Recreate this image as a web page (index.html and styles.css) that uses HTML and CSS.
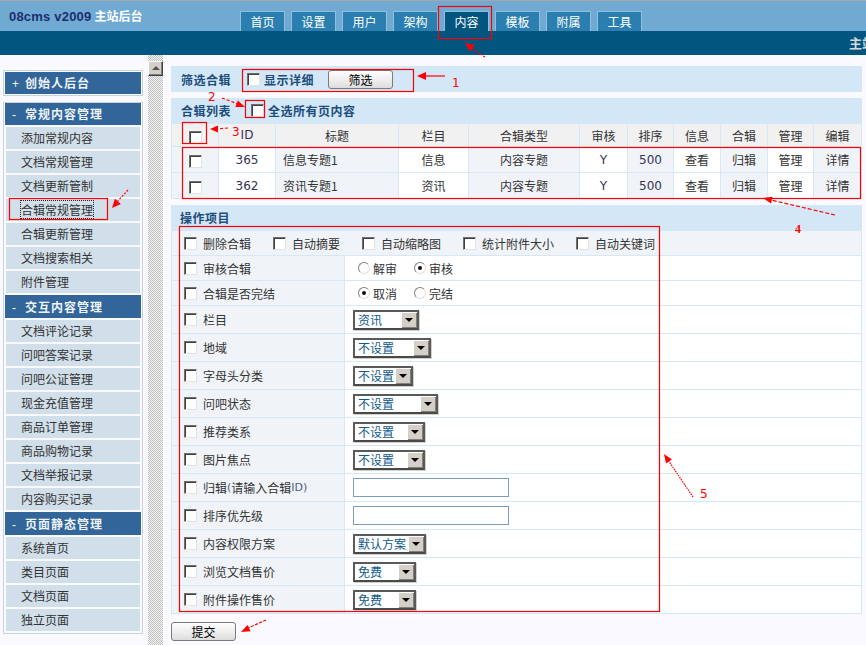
FILE: index.html
```html
<!DOCTYPE html>
<html lang="zh-CN">
<head>
<meta charset="utf-8">
<title>08cms v2009 主站后台</title>
<link rel="stylesheet" href="styles.css">
</head>
<body>
<header class="top">
  <div class="top-band">
    <div class="brand"><span class="brand-en">08cms v2009</span><span class="brand-cn">主站后台</span></div>
    <ul class="tabs">
      <li class="tab">首页</li>
      <li class="tab">设置</li>
      <li class="tab">用户</li>
      <li class="tab">架构</li>
      <li class="tab active">内容</li>
      <li class="tab">模板</li>
      <li class="tab">附属</li>
      <li class="tab">工具</li>
    </ul>
  </div>
  <div class="sub-band"><span class="crumb">主站首页</span></div>
</header>

<div class="wrap">
  <aside class="side">
    <div class="box">
      <div class="grp"><span class="sign">+</span>创始人后台</div>
    </div>
    <div class="box box-main">
      <div class="grp"><span class="sign">-</span>常规内容管理</div>
      <div class="item">添加常规内容</div>
      <div class="item">文档常规管理</div>
      <div class="item">文档更新管制</div>
      <div class="item"><span class="focus">合辑常规管理</span></div>
      <div class="item">合辑更新管理</div>
      <div class="item">文档搜索相关</div>
      <div class="item">附件管理</div>
      <div class="grp"><span class="sign">-</span>交互内容管理</div>
      <div class="item">文档评论记录</div>
      <div class="item">问吧答案记录</div>
      <div class="item">问吧公证管理</div>
      <div class="item">现金充值管理</div>
      <div class="item">商品订单管理</div>
      <div class="item">商品购物记录</div>
      <div class="item">文档举报记录</div>
      <div class="item">内容购买记录</div>
      <div class="grp"><span class="sign">-</span>页面静态管理</div>
      <div class="item">系统首页</div>
      <div class="item">类目页面</div>
      <div class="item">文档页面</div>
      <div class="item">独立页面</div>
    </div>
  </aside>

  <div class="split"><span class="split-btn"></span></div>

  <main class="main">
    <div class="bar filter">
      <span class="bar-title">筛选合辑</span>
      <span class="cb cb-filter"></span>
      <span class="bar-label">显示详细</span>
      <button class="btn btn-filter">筛选</button>
    </div>

    <div class="bar listbar">
      <span class="bar-title">合辑列表</span>
      <span class="cb cb-all"></span>
      <span class="bar-label">全选所有页内容</span>
    </div>

    <table class="list">
      <colgroup>
        <col class="c-chk"><col class="c-id"><col class="c-title"><col class="c-cat"><col class="c-type"><col class="c-chk2"><col class="c-ord"><col class="c-info"><col class="c-alb"><col class="c-mng"><col class="c-edit">
      </colgroup>
      <thead>
        <tr>
          <th><span class="cb"></span></th>
          <th class="num">ID</th>
          <th>标题</th>
          <th>栏目</th>
          <th>合辑类型</th>
          <th>审核</th>
          <th>排序</th>
          <th>信息</th>
          <th>合辑</th>
          <th>管理</th>
          <th>编辑</th>
        </tr>
      </thead>
      <tbody>
        <tr>
          <td class="alt"><span class="cb"></span></td>
          <td class="num">365</td>
          <td class="alt left">信息专题1</td>
          <td>信息</td>
          <td class="alt">内容专题</td>
          <td class="num">Y</td>
          <td class="alt num">500</td>
          <td>查看</td>
          <td class="alt">归辑</td>
          <td>管理</td>
          <td class="alt">详情</td>
        </tr>
        <tr>
          <td class="alt"><span class="cb"></span></td>
          <td class="num">362</td>
          <td class="alt left">资讯专题1</td>
          <td>资讯</td>
          <td class="alt">内容专题</td>
          <td class="num">Y</td>
          <td class="alt num">500</td>
          <td>查看</td>
          <td class="alt">归辑</td>
          <td>管理</td>
          <td class="alt">详情</td>
        </tr>
      </tbody>
    </table>

    <div class="bar opsbar"><span class="bar-title">操作项目</span></div>

    <div class="ops">
      <div class="row row-first">
        <span class="opt"><span class="cb"></span>删除合辑</span>
        <span class="opt"><span class="cb"></span>自动摘要</span>
        <span class="opt"><span class="cb"></span>自动缩略图</span>
        <span class="opt"><span class="cb"></span>统计附件大小</span>
        <span class="opt"><span class="cb"></span>自动关键词</span>
      </div>
      <div class="row row-short">
        <div class="lab"><span class="cb"></span>审核合辑</div>
        <div class="val val-radio"><span class="rd"></span><span class="rd-label">解审</span><span class="rd on"></span><span class="rd-label">审核</span></div>
      </div>
      <div class="row row-short">
        <div class="lab"><span class="cb"></span>合辑是否完结</div>
        <div class="val val-radio"><span class="rd on"></span><span class="rd-label">取消</span><span class="rd"></span><span class="rd-label">完结</span></div>
      </div>
      <div class="row">
        <div class="lab"><span class="cb"></span>栏目</div>
        <div class="val"><span class="sel w66"><span class="sel-val">资讯</span><span class="sel-btn"></span></span></div>
      </div>
      <div class="row">
        <div class="lab"><span class="cb"></span>地域</div>
        <div class="val"><span class="sel w78"><span class="sel-val">不设置</span><span class="sel-btn"></span></span></div>
      </div>
      <div class="row">
        <div class="lab"><span class="cb"></span>字母头分类</div>
        <div class="val"><span class="sel w60"><span class="sel-val">不设置</span><span class="sel-btn"></span></span></div>
      </div>
      <div class="row">
        <div class="lab"><span class="cb"></span>问吧状态</div>
        <div class="val"><span class="sel w85"><span class="sel-val">不设置</span><span class="sel-btn"></span></span></div>
      </div>
      <div class="row">
        <div class="lab"><span class="cb"></span>推荐类系</div>
        <div class="val"><span class="sel w72"><span class="sel-val">不设置</span><span class="sel-btn"></span></span></div>
      </div>
      <div class="row">
        <div class="lab"><span class="cb"></span>图片焦点</div>
        <div class="val"><span class="sel w72"><span class="sel-val">不设置</span><span class="sel-btn"></span></span></div>
      </div>
      <div class="row">
        <div class="lab"><span class="cb"></span>归辑<span class="latin">(</span>请输入合辑<span class="latin">ID)</span></div>
        <div class="val"><span class="txt"></span></div>
      </div>
      <div class="row">
        <div class="lab"><span class="cb"></span>排序优先级</div>
        <div class="val"><span class="txt"></span></div>
      </div>
      <div class="row">
        <div class="lab"><span class="cb"></span>内容权限方案</div>
        <div class="val"><span class="sel w73"><span class="sel-val">默认方案</span><span class="sel-btn"></span></span></div>
      </div>
      <div class="row">
        <div class="lab"><span class="cb"></span>浏览文档售价</div>
        <div class="val"><span class="sel w63"><span class="sel-val">免费</span><span class="sel-btn"></span></span></div>
      </div>
      <div class="row">
        <div class="lab"><span class="cb"></span>附件操作售价</div>
        <div class="val"><span class="sel w63"><span class="sel-val">免费</span><span class="sel-btn"></span></span></div>
      </div>
    </div>

    <button class="btn btn-submit">提交</button>
  </main>
</div>

<svg class="notes" width="866" height="645" viewBox="0 0 866 645" xmlns="http://www.w3.org/2000/svg">
  <g fill="none" stroke="#ff0000" stroke-width="1.2">
    <rect x="438.5" y="6.5" width="53" height="32"/>
    <rect x="9.5" y="198.5" width="98" height="21"/>
    <rect x="242.5" y="69.5" width="171" height="22"/>
    <rect x="245.5" y="100.5" width="19" height="17"/>
    <rect x="182.5" y="122.5" width="24" height="21"/>
    <rect x="182.5" y="147.5" width="678" height="51"/>
    <rect x="179.5" y="226.5" width="480" height="385"/>
    <line x1="485" y1="57" x2="470" y2="47" stroke-dasharray="2 1.5"/>
    <line x1="128" y1="190" x2="116" y2="203" stroke-dasharray="2 1.5"/>
    <line x1="445" y1="76" x2="424" y2="76"/>
    <line x1="222" y1="98" x2="238" y2="104" stroke-dasharray="3 2"/>
    <line x1="228" y1="128" x2="217" y2="129" stroke-dasharray="3 2"/>
    <line x1="835" y1="215" x2="771" y2="200" stroke-dasharray="4 2"/>
    <line x1="693" y1="497" x2="668" y2="460" stroke-dasharray="1.5 1"/>
    <line x1="266" y1="620" x2="248" y2="628" stroke-dasharray="3 1.5"/>
  </g>
  <g fill="#ff0000">
    <polygon points="465,43 474.7,44.9 470.1,51.5"/>
    <polygon points="112,208 120.9,203.9 114.9,198.7"/>
    <polygon points="417,76 426,72 426,80"/>
    <polygon points="245,107 235.3,107 237.9,100.4"/>
    <polygon points="210,129 218,125.5 218,132.5"/>
    <polygon points="763,198 772.6,196.7 771,203.5"/>
    <polygon points="664,454 671.9,459.5 666.1,463.5"/>
    <polygon points="241,632 250.6,631.3 247.6,624.9"/>
  </g>
  <g class="note-num" fill="#ff0000">
    <text x="452" y="87">1</text>
    <text x="208" y="101">2</text>
    <text x="232" y="136">3</text>
    <text x="795" y="233" class="note-serif">4</text>
    <text x="700" y="498">5</text>
  </g>
</svg>
</body>
</html>
```

FILE: styles.css
```css
* { box-sizing: border-box; }

html, body {
  margin: 0;
  padding: 0;
}

body {
  position: relative;
  width: 866px;
  height: 645px;
  overflow: hidden;
  background: #f9f9fe;
  font-family: "DejaVu Sans", "Noto Sans CJK SC", sans-serif;
  font-size: 12px;
  color: #333;
}

/* ---------- header ---------- */
.top-band {
  display: flex;
  align-items: flex-end;
  height: 31px;
  border-top: 1px solid #a6a6a6;
  background: #70aad3;
}

.brand {
  align-self: center;
  width: 240px;
  padding-left: 9px;
  font-weight: bold;
  white-space: nowrap;
  line-height: 16px;
}

.brand-en {
  font-family: "Liberation Sans", sans-serif;
  font-size: 13px;
  color: #1b2f6e;
  letter-spacing: 0.2px;
}

.brand-cn {
  margin-left: 3px;
  font-family: "Noto Sans CJK SC", sans-serif;
  font-size: 12px;
  color: #fff;
}

.tabs {
  display: flex;
  gap: 6px;
  margin: 0;
  padding: 0;
  list-style: none;
}

.tab {
  width: 45px;
  height: 20px;
  border: 1px solid #8fc0e0;
  border-bottom: none;
  background: #2b7fb0;
  color: #fff;
  text-align: center;
  font-family: "Noto Sans CJK SC", sans-serif;
  font-size: 12px;
  line-height: 20px;
}

.tab.active {
  background: #02557f;
}

.sub-band {
  height: 24px;
  background: #02557f;
  padding-left: 849px;
  overflow: hidden;
  white-space: nowrap;
}

.crumb {
  font-family: "Noto Sans CJK SC", sans-serif;
  font-size: 13px;
  font-weight: bold;
  color: #d9d9d9;
  line-height: 24px;
}

/* ---------- layout ---------- */
.wrap {
  display: flex;
  align-items: flex-start;
}

/* ---------- sidebar ---------- */
.side {
  width: 140px;
  margin: 15px 0 0 3px;
}

.box {
  border: 1px solid #c5d3e1;
  padding: 1px;
}

.box-main {
  margin-top: 6px;
  padding-top: 0;
  padding-bottom: 2px;
}

.grp {
  height: 22px;
  background: #32669a;
  color: #eef3f8;
  font-family: "Noto Sans CJK SC", sans-serif;
  font-weight: bold;
  font-size: 12px;
  letter-spacing: 1px;
  line-height: 22px;
  white-space: nowrap;
}

.box-main .grp { margin-top: 2px; height: 23px; line-height: 23px; }
.box-main .grp:first-child { margin-top: 0; height: 22px; line-height: 22px; }

.sign {
  display: inline-block;
  width: 20px;
  padding-left: 7px;
  font-family: "Liberation Sans", sans-serif;
  font-weight: normal;
  letter-spacing: 0;
}

.item {
  height: 22px;
  margin: 2px 1px 0;
  background: #d1dfea;
  padding-left: 15px;
  font-family: "Noto Sans CJK SC", sans-serif;
  font-size: 12px;
  line-height: 22px;
  color: #333;
  white-space: nowrap;
}

.focus {
  outline: 1px dotted #222;
  outline-offset: 0;
}

/* ---------- splitter ---------- */
.split {
  width: 15px;
  height: 590px;
  margin-left: 5px;
  padding-top: 6px;
  background: repeating-conic-gradient(#bfbfbf 0 25%, #f4f4f4 0 50%) 0 0 / 2px 2px;
}

.split-btn {
  display: block;
  position: relative;
  width: 15px;
  height: 15px;
  background: #d4d0c8;
  border: 1px solid;
  border-color: #fff #404040 #404040 #fff;
  box-shadow: inset -1px -1px #808080;
}

.split-btn::after {
  content: "";
  position: absolute;
  left: 3px;
  top: 4px;
  border-left: 4px solid transparent;
  border-right: 4px solid transparent;
  border-bottom: 4px solid #555;
}

/* ---------- main ---------- */
.main {
  width: 691px;
  margin: 11px 0 0 8px;
}

.bar {
  display: flex;
  align-items: center;
  height: 26px;
  background: #d4e7f7;
  padding-left: 10px;
  font-family: "Noto Sans CJK SC", sans-serif;
  white-space: nowrap;
}

.bar-title {
  font-weight: bold;
  font-size: 12px;
  letter-spacing: 0.5px;
  color: #1c4d7b;
}

.bar-label {
  margin-left: 4px;
  font-weight: bold;
  font-size: 12px;
  letter-spacing: 0.5px;
  color: #1c4d7b;
}

.filter { margin-bottom: 6px; }
.cb-filter { margin-left: 16px; }
.btn-filter { margin-left: 14px; }

.listbar { height: 25px; }
.cb-all { margin-left: 20px; }

.opsbar { height: 25px; margin-top: 6px; padding-left: 9px; }

/* checkbox & radio */
.cb {
  display: inline-block;
  flex: none;
  width: 13px;
  height: 13px;
  vertical-align: middle;
  background: #fff;
  border: 1px solid;
  border-color: #707070 #e2e2e2 #e2e2e2 #707070;
  box-shadow: inset 1px 1px #404040;
}

.rd {
  display: inline-block;
  flex: none;
  position: relative;
  width: 12px;
  height: 12px;
  border-radius: 50%;
  border: 1px solid;
  border-color: #808080 #e0e0e0 #e0e0e0 #808080;
  background: #fff;
}

.rd.on::after {
  content: "";
  position: absolute;
  left: 3px;
  top: 3px;
  width: 4px;
  height: 4px;
  border-radius: 50%;
  background: #111;
}

.rd-label {
  margin-left: 3px;
  margin-right: 17px;
}

/* buttons */
.btn {
  width: 65px;
  height: 19px;
  padding: 0;
  border: 1px solid #7b7b7b;
  border-radius: 3px;
  background: linear-gradient(#fdfdfd, #ececec 60%, #dcdcdc);
  font-family: "Noto Sans CJK SC", sans-serif;
  font-size: 12px;
  line-height: 17px;
  color: #000;
}

.btn-submit {
  display: block;
  margin-top: 8px;
}

/* list table */
.list {
  width: 691px;
  table-layout: fixed;
  border-collapse: separate;
  border-spacing: 1px;
  background: #d6e8f8;
  font-family: "Noto Sans CJK SC", sans-serif;
  font-size: 12px;
}

.c-chk { width: 46px; }
.c-id { width: 56px; }
.c-title { width: 122px; }
.c-cat { width: 69px; }
.c-type { width: 110px; }
.c-chk2 { width: 47px; }
.c-ord { width: 45px; }
.c-info { width: 46px; }
.c-alb { width: 46px; }
.c-mng { width: 45px; }
.c-edit { width: 47px; }

.list th {
  height: 22px;
  padding: 0;
  background: #f1f1f1;
  font-weight: normal;
  color: #333;
  text-align: center;
}

.list td {
  height: 25px;
  padding: 0;
  background: #fff;
  color: #333;
  text-align: center;
}

.list td.alt { background: #f0f4f9; }
.list td.left { text-align: left; padding-left: 7px; }
.list .num {
  font-family: "DejaVu Sans", sans-serif;
  color: #333355;
}

/* operations table */
.ops {
  border: 1px solid #d6e8f8;
  border-top: none;
  font-family: "Noto Sans CJK SC", sans-serif;
  font-size: 12px;
  color: #333;
}

.row {
  display: flex;
  height: 28px;
  border-top: 1px solid #d6e8f8;
}

.row-short { height: 25px; }

.row-first {
  height: 25px;
  align-items: center;
  gap: 22px;
  padding-left: 12px;
  background: #f0f4f8;
  white-space: nowrap;
}

.opt {
  display: flex;
  align-items: center;
}

.opt .cb { margin-right: 6px; }

.lab {
  display: flex;
  align-items: center;
  width: 173px;
  padding-left: 12px;
  border-right: 1px solid #d6e8f8;
  background: #f0f4f8;
  white-space: nowrap;
}

.lab .cb { margin-right: 6px; }

.latin {
  font-family: "DejaVu Sans", sans-serif;
  font-size: 11px;
  color: #4a5a80;
}

.val {
  display: flex;
  align-items: center;
  flex: 1;
  padding-left: 8px;
  background: #fff;
}

.val-radio { padding-left: 13px; }

/* select look-alike */
.sel {
  display: inline-flex;
  height: 20px;
  border: 2px solid;
  border-color: #5a5a5a #5a5a5a #4a4a4a #5a5a5a;
  box-shadow: 1px 1px 0 #d4d0c8;
  background: #fff;
}

.w60 { width: 60px; }
.w63 { width: 63px; }
.w66 { width: 66px; }
.w72 { width: 72px; }
.w73 { width: 73px; }
.w78 { width: 78px; }
.w85 { width: 85px; }

.sel-val {
  flex: 1;
  padding-left: 3px;
  color: #0f5a8c;
  line-height: 16px;
  white-space: nowrap;
  overflow: hidden;
}

.sel-btn {
  position: relative;
  width: 16px;
  flex: none;
  background: #d4d0c8;
  box-shadow: inset 1px 1px #fff, inset -1px -1px #808080;
}

.sel-btn::after {
  content: "";
  position: absolute;
  left: 4px;
  top: 6px;
  border-left: 4px solid transparent;
  border-right: 4px solid transparent;
  border-top: 4px solid #000;
}

.txt {
  display: inline-block;
  width: 156px;
  height: 19px;
  border: 1px solid #7f9db9;
  background: #fff;
}

/* annotation overlay */
.notes {
  position: absolute;
  left: 0;
  top: 0;
  pointer-events: none;
}

.note-num {
  font-family: "DejaVu Sans", sans-serif;
  font-size: 12px;
}

.note-serif {
  font-family: "Liberation Serif", serif;
  font-weight: bold;
  font-size: 12px;
}
```
